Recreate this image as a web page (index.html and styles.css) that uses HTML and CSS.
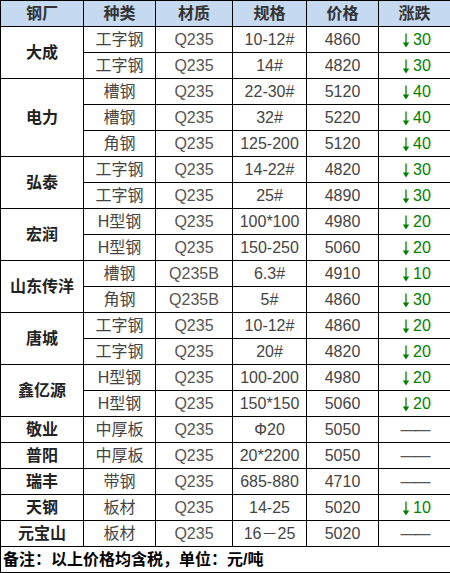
FILE: index.html
```html
<!DOCTYPE html>
<html lang="zh">
<head>
<meta charset="utf-8">
<link rel="stylesheet" href="styles.css">
</head>
<body>
<svg class="defs" width="0" height="0" aria-hidden="true">
<defs>
<symbol id="arrow" viewBox="0 0 8 15">
<path d="M4 0.5 V13" stroke="#008000" stroke-width="1.3" fill="none"/>
<path d="M0.8 9.5 L4 14.5 L7.2 9.5 Z" fill="#008000"/>
</symbol>
</defs>
</svg>
<table class="price">
<colgroup>
<col class="c1"><col class="c2"><col class="c3"><col class="c4"><col class="c5"><col class="c6">
</colgroup>
<thead>
<tr><th>钢厂</th><th>种类</th><th>材质</th><th>规格</th><th>价格</th><th>涨跌</th></tr>
</thead>
<tbody>
<tr><td class="mill" rowspan="2">大成</td><td class="kind">工字钢</td><td class="mat">Q235</td><td>10-12#</td><td>4860</td><td class="down"><svg class="ar"><use href="#arrow"/></svg>30</td></tr>
<tr><td class="kind">工字钢</td><td class="mat">Q235</td><td>14#</td><td>4820</td><td class="down"><svg class="ar"><use href="#arrow"/></svg>30</td></tr>
<tr><td class="mill" rowspan="3">电力</td><td class="kind">槽钢</td><td class="mat">Q235</td><td>22-30#</td><td>5120</td><td class="down"><svg class="ar"><use href="#arrow"/></svg>40</td></tr>
<tr><td class="kind">槽钢</td><td class="mat">Q235</td><td>32#</td><td>5220</td><td class="down"><svg class="ar"><use href="#arrow"/></svg>40</td></tr>
<tr><td class="kind">角钢</td><td class="mat">Q235</td><td>125-200</td><td>5120</td><td class="down"><svg class="ar"><use href="#arrow"/></svg>40</td></tr>
<tr><td class="mill" rowspan="2">弘泰</td><td class="kind">工字钢</td><td class="mat">Q235</td><td>14-22#</td><td>4820</td><td class="down"><svg class="ar"><use href="#arrow"/></svg>30</td></tr>
<tr><td class="kind">工字钢</td><td class="mat">Q235</td><td>25#</td><td>4890</td><td class="down"><svg class="ar"><use href="#arrow"/></svg>30</td></tr>
<tr><td class="mill" rowspan="2">宏润</td><td class="kind">H型钢</td><td class="mat">Q235</td><td>100*100</td><td>4980</td><td class="down"><svg class="ar"><use href="#arrow"/></svg>20</td></tr>
<tr><td class="kind">H型钢</td><td class="mat">Q235</td><td>150-250</td><td>5060</td><td class="down"><svg class="ar"><use href="#arrow"/></svg>20</td></tr>
<tr><td class="mill" rowspan="2">山东传洋</td><td class="kind">槽钢</td><td class="mat">Q235B</td><td>6.3#</td><td>4910</td><td class="down"><svg class="ar"><use href="#arrow"/></svg>10</td></tr>
<tr><td class="kind">角钢</td><td class="mat">Q235B</td><td>5#</td><td>4860</td><td class="down"><svg class="ar"><use href="#arrow"/></svg>30</td></tr>
<tr><td class="mill" rowspan="2">唐城</td><td class="kind">工字钢</td><td class="mat">Q235</td><td>10-12#</td><td>4860</td><td class="down"><svg class="ar"><use href="#arrow"/></svg>20</td></tr>
<tr><td class="kind">工字钢</td><td class="mat">Q235</td><td>20#</td><td>4820</td><td class="down"><svg class="ar"><use href="#arrow"/></svg>20</td></tr>
<tr><td class="mill" rowspan="2">鑫亿源</td><td class="kind">H型钢</td><td class="mat">Q235</td><td>100-200</td><td>4980</td><td class="down"><svg class="ar"><use href="#arrow"/></svg>20</td></tr>
<tr><td class="kind">H型钢</td><td class="mat">Q235</td><td>150*150</td><td>5060</td><td class="down"><svg class="ar"><use href="#arrow"/></svg>20</td></tr>
<tr><td class="mill">敬业</td><td class="kind">中厚板</td><td class="mat">Q235</td><td>Φ20</td><td>5050</td><td class="flat">——</td></tr>
<tr><td class="mill">普阳</td><td class="kind">中厚板</td><td class="mat">Q235</td><td>20*2200</td><td>5050</td><td class="flat">——</td></tr>
<tr><td class="mill">瑞丰</td><td class="kind">带钢</td><td class="mat">Q235</td><td>685-880</td><td>4710</td><td class="flat">——</td></tr>
<tr><td class="mill">天钢</td><td class="kind">板材</td><td class="mat">Q235</td><td>14-25</td><td>5020</td><td class="down"><svg class="ar"><use href="#arrow"/></svg>10</td></tr>
<tr><td class="mill">元宝山</td><td class="kind">板材</td><td class="mat">Q235</td><td>16－25</td><td>5020</td><td class="flat">——</td></tr>
</tbody>
<tfoot>
<tr><td class="note" colspan="6">备注：以上价格均含税，单位：元/吨</td></tr>
</tfoot>
</table>
</body>
</html>
```
FILE: styles.css
```css
html, body {
  margin: 0;
  padding: 0;
  background: #ffffff;
}
.defs {
  position: absolute;
  width: 0;
  height: 0;
  overflow: hidden;
}
.price {
  border-collapse: collapse;
  width: 450px;
  table-layout: fixed;
  font-family: "Liberation Sans", "Noto Sans CJK SC", sans-serif;
  font-size: 16px;
  color: #444444;
}
.c1 { width: 83px; }
.c2 { width: 72px; }
.c3 { width: 77px; }
.c4 { width: 74px; }
.c5 { width: 72px; }
.c6 { width: 72px; }
.price th, .price td {
  border: 1px solid #000000;
  height: 26px;
  padding: 0;
  text-align: center;
  vertical-align: middle;
  line-height: 24px;
  box-sizing: border-box;
  white-space: nowrap;
}
.price th {
  background: #c5d9f1;
  color: #333333;
  font-weight: bold;
}
.mill {
  font-weight: bold;
  color: #222222;
}
.kind { color: #444444; }
.mat { color: #555555; }
.down {
  color: #008000;
  padding-left: 4px !important;
}
.ar {
  width: 8px;
  height: 15px;
  margin-right: 3px;
  vertical-align: -3px;
}
.flat {
  color: #555555;
  font-size: 16px;
  letter-spacing: -2px;
}
.note {
  text-align: left !important;
  padding-left: 2px !important;
  font-weight: bold;
  color: #000000;
}
```
